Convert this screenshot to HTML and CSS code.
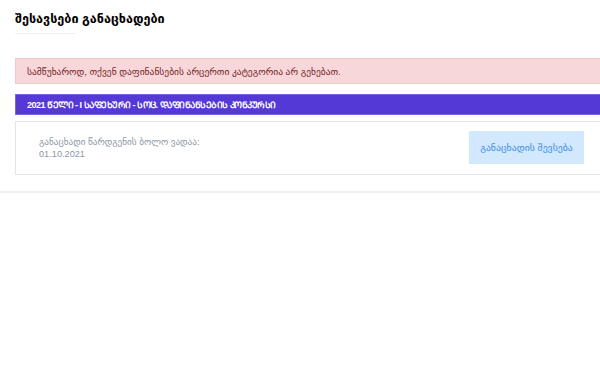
FILE: index.html
```html
<!DOCTYPE html>
<html>
<head>
    <title>შესავსები განაცხადები</title>
    <link rel="stylesheet" href="styles.css">
</head>
<body>
    <div class="page">
        <div class="content">
            <h1 class="page-title">შესავსები განაცხადები</h1>

            <div class="alert">
                სამწუხაროდ, თქვენ დაფინანსების არცერთი კატეგორია არ გეხებათ.
            </div>

            <!-- მთავრული ასოებით -->
            <div class="stage-bar">2021 ᲬᲔᲚᲘ - I ᲡᲐᲤᲔᲮᲣᲠᲘ - ᲡᲝᲪ. ᲓᲐᲤᲘᲜᲐᲜᲡᲔᲑᲘᲡ ᲙᲝᲜᲙᲣᲠᲡᲘ</div>

            <div class="app-card">
                <div class="deadline">
                    განაცხადი წარდგენის ბოლო ვადაა:<br>
                    01.10.2021
                </div>
                <button class="fill-btn">განაცხადის შევსება</button>
            </div>
        </div>
    </div>
</body>
</html>
```

FILE: styles.css
```css
body {
    font-family: "Liberation Sans", "DejaVu Sans", "Noto Sans", sans-serif;
    margin: 0;
    padding: 0;
    background: #fff;
    overflow: hidden;
}
.page {
    width: 620px;
    border-bottom: 2px solid #eef0f3;
    padding-bottom: 16px;
}
.content {
    padding: 0 0 0 15px;
}
.page-title {
    font-size: 12.6px;
    font-weight: bold;
    color: #000;
    margin: 0;
    padding-top: 11px;
}
.page-title:after {
    content: "";
    display: block;
    width: 61px;
    height: 1px;
    margin-top: 7px;
    background: #eef0f3;
}
.alert {
    margin-top: 24px;
    background: #f8d7da;
    border: 1px solid #f5c6cb;
    color: #721c24;
    font-size: 9.5px;
    padding: 7px 11px 6px;
}
.stage-bar {
    margin-top: 10px;
    background: #5539d6;
    border: 1px solid #7b63e3;
    color: #fff;
    font-size: 9px;
    font-weight: bold;
    letter-spacing: -0.5px;
    padding: 3px 11px;
}
.app-card {
    margin-top: 6px;
    border: 1px solid #e4e6ea;
    display: flex;
    justify-content: space-between;
    align-items: center;
    padding: 9px 35px 10px 23px;
}
.deadline {
    color: #8d96a5;
    font-size: 9.2px;
    line-height: 12px;
}
.fill-btn {
    font-family: inherit;
    background: #d2e8fc;
    border: none;
    color: #3c8ee6;
    font-size: 9.8px;
    width: 115px;
    height: 33px;
}
```
